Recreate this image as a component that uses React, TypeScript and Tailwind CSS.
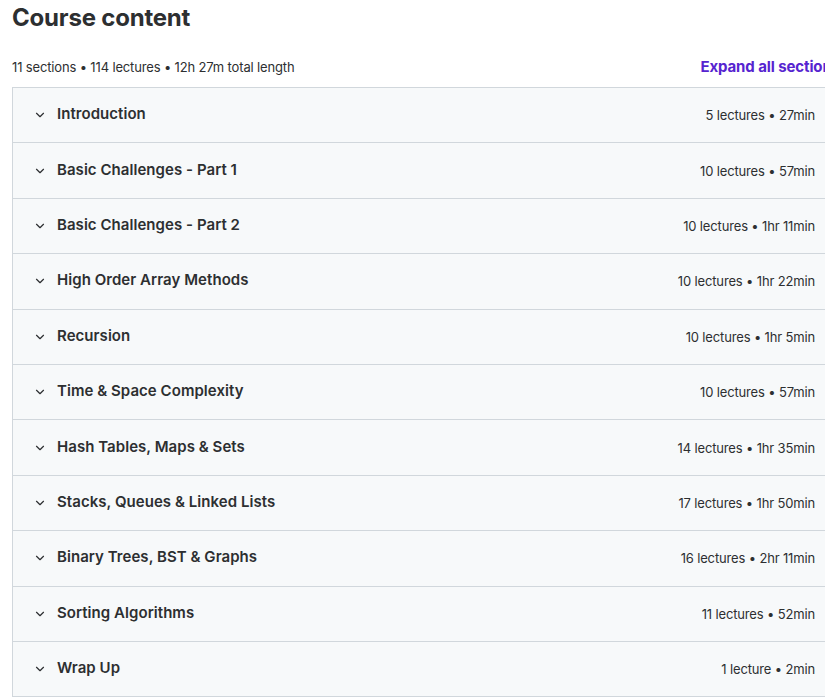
import { ChevronDown } from 'lucide-react';

const sections = [
  { title: 'Introduction', meta: '5 lectures • 27min' },
  { title: 'Basic Challenges - Part 1', meta: '10 lectures • 57min' },
  { title: 'Basic Challenges - Part 2', meta: '10 lectures • 1hr 11min' },
  { title: 'High Order Array Methods', meta: '10 lectures • 1hr 22min' },
  { title: 'Recursion', meta: '10 lectures • 1hr 5min' },
  { title: 'Time & Space Complexity', meta: '10 lectures • 57min' },
  { title: 'Hash Tables, Maps & Sets', meta: '14 lectures • 1hr 35min' },
  { title: 'Stacks, Queues & Linked Lists', meta: '17 lectures • 1hr 50min' },
  { title: 'Binary Trees, BST & Graphs', meta: '16 lectures • 2hr 11min' },
  { title: 'Sorting Algorithms', meta: '11 lectures • 52min' },
  { title: 'Wrap Up', meta: '1 lecture • 2min' },
];

export default function App() {
  return (
    <div className="w-[825px] h-[698px] overflow-hidden bg-white text-[#2d2f31] font-['Inter',sans-serif]">
      <div className="w-[840px] pl-3">
        <h2 className="pt-[3px] text-[24px] font-bold leading-[30px] tracking-[-0.2px]">Course content</h2>
        <div className="mt-[24px] flex items-center justify-between pb-[10px]">
          <span className="text-[13px] leading-[20px] tracking-[-0.15px]">11 sections • 114 lectures • 12h 27m total length</span>
          <button className="text-[15px] font-bold leading-[20px] text-[#5624d0] tracking-[-0.1px] whitespace-nowrap">
            Expand all sections
          </button>
        </div>
        <div className="border border-[#d1d7dc] border-b-0">
          {sections.map((s) => (
            <div
              key={s.title}
              className="flex h-[55.4px] items-center justify-between border-b border-[#d1d7dc] bg-[#f7f9fa] pl-[20px] pr-[24px]"
            >
              <div className="flex items-center">
                <ChevronDown size={14} strokeWidth={2} className="text-[#2d2f31]" />
                <span className="ml-[10px] -mt-[2px] text-[15px] font-semibold leading-[20px] tracking-[0.05px]">{s.title}</span>
              </div>
              <span className="text-[13px] leading-[20px] text-[#2d2f31] tracking-[-0.15px]">{s.meta}</span>
            </div>
          ))}
        </div>
      </div>
    </div>
  );
}
